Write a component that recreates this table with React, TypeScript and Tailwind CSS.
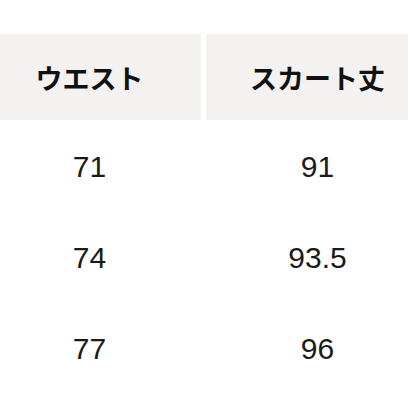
import React from "react";

const rows = [
  ["71", "91"],
  ["74", "93.5"],
  ["77", "96"],
];

export default function App() {
  return (
    <div
      className="w-[408px] h-[408px] overflow-hidden bg-white"
      style={{ fontFamily: '"Noto Sans CJK JP", "Noto Sans", sans-serif' }}
    >
      <div className="ml-[-22px] w-[451px] pt-[34px]">
        <div className="grid grid-cols-[223px_223px] gap-x-[5px]">
          <div className="h-[86px] bg-[#f3f2f1] flex items-center justify-center text-[27px] font-bold text-[#111] leading-none">
            ウエスト
          </div>
          <div className="h-[86px] bg-[#f3f2f1] flex items-center justify-center text-[27px] font-bold text-[#111] leading-none">
            スカート丈
          </div>
        </div>
        {rows.map((r, i) => (
          <div key={i} className="grid grid-cols-[223px_223px] gap-x-[5px]">
            {r.map((v, j) => (
              <div
                key={j}
                className="h-[91px] flex items-center justify-center text-[30px] font-normal text-[#1a1a1a] leading-none pt-[3px] font-['Liberation_Sans',Arial,sans-serif]"
              >
                {v}
              </div>
            ))}
          </div>
        ))}
      </div>
    </div>
  );
}
